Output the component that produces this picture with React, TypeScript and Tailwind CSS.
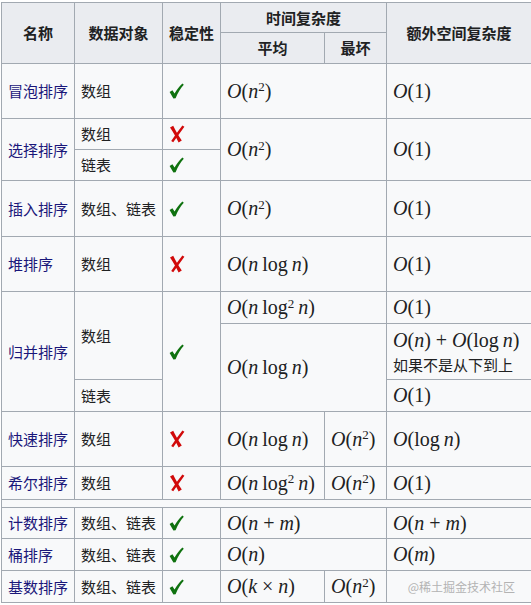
import type { ReactNode } from "react";

const I = ({ children }: { children: ReactNode }) => <i className="italic">{children}</i>;

function M({ children }: { children: ReactNode }) {
  return (
    <span className="whitespace-nowrap font-['Liberation_Serif',serif] text-[20px] text-[#202122]">
      {children}
    </span>
  );
}

const Sq = () => <sup className="text-[13px]">2</sup>;

function Check() {
  return (
    <svg width="15" height="16" viewBox="0 0 15 16" className="block">
      <path d="M0.6 9 L3.4 7.2 L5.6 10.6 C7.8 6.8 10.2 3.4 13.4 0.6 L14.8 1.8 C11.6 5.2 8.8 9.6 6.6 15.2 L4.4 15.4 Z" fill="#0f720f" />
    </svg>
  );
}

function Cross() {
  return (
    <svg width="16" height="18" viewBox="0 0 16 18" className="block">
      <path d="M1 2.6 L4.2 0.8 C6.4 5.4 9.4 10.4 12.8 15.6 L9.6 17.4 C7 12.2 4.2 7.2 1 2.6 Z" fill="#d10a0a" />
      <path d="M13.4 0.6 L15.4 1.8 C11.8 6.8 7.8 12 4.2 17.2 L2.2 16 C5.8 10.6 9.6 5.4 13.4 0.6 Z" fill="#d10a0a" />
    </svg>
  );
}

const td = "border border-[#a2a9b1] px-[6px] py-0 align-middle";
const th = "border border-[#a2a9b1] bg-[#eaecf0] px-[6px] py-0 text-center align-middle font-bold";

function Name({ children }: { children: ReactNode }) {
  return <span className="text-[#1a177a]">{children}</span>;
}

const nlogn = (
  <M>
    <I>O</I>(<I>n</I>&thinsp;log&thinsp;<I>n</I>)
  </M>
);
const nlog2n = (
  <M>
    <I>O</I>(<I>n</I>&thinsp;log<Sq />&thinsp;<I>n</I>)
  </M>
);
const n2 = (
  <M>
    <I>O</I>(<I>n</I>
    <Sq />)
  </M>
);
const one = (
  <M>
    <I>O</I>(1)
  </M>
);

export default function App() {
  return (
    <div className="min-h-[605px] w-[531px] bg-white pl-[1px] pt-[2px] font-['Noto_Sans_CJK_SC',sans-serif] text-[15px] text-[#202122]">
      <table className="w-[530px] table-fixed border-collapse bg-[#f8f9fa] leading-[22px]">
        <colgroup>
          <col className="w-[73px]" />
          <col className="w-[88px]" />
          <col className="w-[58px]" />
          <col className="w-[104px]" />
          <col className="w-[62px]" />
          <col className="w-[145px]" />
        </colgroup>
        <thead>
          <tr className="h-[30px]">
            <th rowSpan={2} className={th}>名称</th>
            <th rowSpan={2} className={th}>数据对象</th>
            <th rowSpan={2} className={th}>稳定性</th>
            <th colSpan={2} className={th}>时间复杂度</th>
            <th rowSpan={2} className={th}>额外空间复杂度</th>
          </tr>
          <tr className="h-[31px]">
            <th className={th}>平均</th>
            <th className={th}>最坏</th>
          </tr>
        </thead>
        <tbody>
          <tr className="h-[55px]">
            <td className={td}><Name>冒泡排序</Name></td>
            <td className={td}>数组</td>
            <td className={td}><Check /></td>
            <td colSpan={2} className={td}>{n2}</td>
            <td className={td}>{one}</td>
          </tr>

          <tr className="h-[31px]">
            <td rowSpan={2} className={td}><Name>选择排序</Name></td>
            <td className={td}>数组</td>
            <td className={td}><Cross /></td>
            <td rowSpan={2} colSpan={2} className={td}>{n2}</td>
            <td rowSpan={2} className={td}>{one}</td>
          </tr>
          <tr className="h-[31px]">
            <td className={td}>链表</td>
            <td className={td}><Check /></td>
          </tr>

          <tr className="h-[56px]">
            <td className={td}><Name>插入排序</Name></td>
            <td className={td}>数组、链表</td>
            <td className={td}><Check /></td>
            <td colSpan={2} className={td}>{n2}</td>
            <td className={td}>{one}</td>
          </tr>

          <tr className="h-[55px]">
            <td className={td}><Name>堆排序</Name></td>
            <td className={td}>数组</td>
            <td className={td}><Cross /></td>
            <td colSpan={2} className={td}>{nlogn}</td>
            <td className={td}>{one}</td>
          </tr>

          {/* merge sort spans three rows */}
          <tr className="h-[32px]">
            <td rowSpan={3} className={td}><Name>归并排序</Name></td>
            <td rowSpan={2} className={td}>数组</td>
            <td rowSpan={3} className={td}><Check /></td>
            <td colSpan={2} className={td}>{nlog2n}</td>
            <td className={td}>{one}</td>
          </tr>
          <tr className="h-[56px]">
            <td rowSpan={2} colSpan={2} className={td}>{nlogn}</td>
            <td className={td}>
              <div className="leading-[26px]">
                <M>
                  <I>O</I>(<I>n</I>) + <I>O</I>(log&thinsp;<I>n</I>)
                </M>
              </div>
              <div className="leading-[22px]">如果不是从下到上</div>
            </td>
          </tr>
          <tr className="h-[32px]">
            <td className={td}>链表</td>
            <td className={td}>{one}</td>
          </tr>

          <tr className="h-[55px]">
            <td className={td}><Name>快速排序</Name></td>
            <td className={td}>数组</td>
            <td className={td}><Cross /></td>
            <td className={td}>{nlogn}</td>
            <td className={td}>{n2}</td>
            <td className={td}>
              <M>
                <I>O</I>(log&thinsp;<I>n</I>)
              </M>
            </td>
          </tr>

          <tr className="h-[33px]">
            <td className={td}><Name>希尔排序</Name></td>
            <td className={td}>数组</td>
            <td className={td}><Cross /></td>
            <td className={td}>{nlog2n}</td>
            <td className={td}>{n2}</td>
            <td className={td}>{one}</td>
          </tr>

          <tr className="h-[8px]">
            <td colSpan={6} className="border border-[#a2a9b1] p-0 leading-[0]" />
          </tr>

          <tr className="h-[31px]">
            <td className={td}><Name>计数排序</Name></td>
            <td className={td}>数组、链表</td>
            <td className={td}><Check /></td>
            <td colSpan={2} className={td}>
              <M>
                <I>O</I>(<I>n</I> + <I>m</I>)
              </M>
            </td>
            <td className={td}>
              <M>
                <I>O</I>(<I>n</I> + <I>m</I>)
              </M>
            </td>
          </tr>

          <tr className="h-[32px]">
            <td className={td}><Name>桶排序</Name></td>
            <td className={td}>数组、链表</td>
            <td className={td}><Check /></td>
            <td colSpan={2} className={td}>
              <M>
                <I>O</I>(<I>n</I>)
              </M>
            </td>
            <td className={td}>
              <M>
                <I>O</I>(<I>m</I>)
              </M>
            </td>
          </tr>

          <tr className="h-[32px]">
            <td className={td}><Name>基数排序</Name></td>
            <td className={td}>数组、链表</td>
            <td className={td}><Check /></td>
            <td className={td}>
              <M>
                <I>O</I>(<I>k</I> × <I>n</I>)
              </M>
            </td>
            <td className={td}>{n2}</td>
            <td className={`${td} pr-[16px] text-right text-[12px] text-[#b3b3b3]`}>@稀土掘金技术社区</td>
          </tr>
        </tbody>
      </table>
    </div>
  );
}
